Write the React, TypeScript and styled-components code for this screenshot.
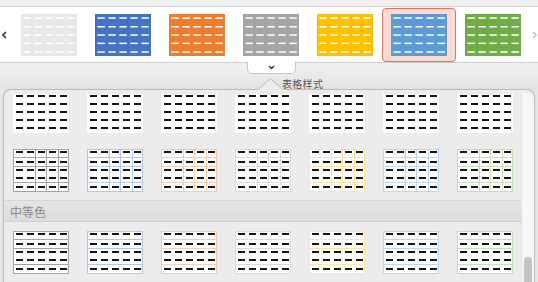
import { useLayoutEffect, useRef } from 'react';
import styled, { createGlobalStyle } from 'styled-components';

const GlobalStyle = createGlobalStyle`
  html, body {
    margin: 0;
    padding: 0;
  }
  body {
    background: #e7e7e7;
    font-family: 'Noto Sans CJK SC', 'Noto Sans', sans-serif;
  }
`;

const Page = styled.div`
  width: 538px;
  height: 282px;
  overflow: hidden;
  display: flex;
  flex-direction: column;
  background: #e7e7e7;
`;

const TopStrip = styled.div`
  flex-shrink: 0;
  height: 6px;
  background: #f1f1f1;
  border-bottom: 1px solid #d3d3d3;
`;

const Ribbon = styled.div`
  flex-shrink: 0;
  height: 55px;
  display: flex;
  align-items: flex-start;
  background: #fff;
  border-bottom: 1px solid #cdcdcd;
`;

const NavArrow = styled.div<{ $side: 'left' | 'right' }>`
  width: ${(p) => (p.$side === 'left' ? 12 : 8)}px;
  align-self: stretch;
  display: flex;
  align-items: center;
  justify-content: ${(p) => (p.$side === 'left' ? 'flex-start' : 'flex-end')};
  padding: ${(p) => (p.$side === 'left' ? '0 0 0 2px' : '0 1px 0 0')};
  box-sizing: border-box;
`;

const StyleCell = styled.div<{ $selected?: boolean }>`
  width: 74px;
  height: 54px;
  margin-top: 1px;
  box-sizing: border-box;
  padding: 5px 8px;
  border: 1px solid ${(p) => (p.$selected ? '#e2725b' : 'transparent')};
  border-radius: 4px;
  background: ${(p) => (p.$selected ? '#fadbd4' : 'transparent')};
  display: flex;
`;

const GalleryBar = styled.div`
  flex-shrink: 0;
  height: 26px;
  display: flex;
  flex-direction: column;
  align-items: flex-start;
  background: linear-gradient(#f0f0f0, #e4e4e4);
`;

const ExpandTab = styled.div`
  margin: -1px 0 0 247px;
  width: 49px;
  height: 12px;
  box-sizing: border-box;
  background: #fff;
  border: 1px solid #c6c6c6;
  border-top: none;
  border-radius: 0 0 5px 5px;
  display: flex;
  align-items: center;
  justify-content: center;
`;

const BarLabel = styled.div`
  margin: 4px 0 0 282px;
  font-size: 10px;
  line-height: 11px;
  color: #555;
  letter-spacing: 0.3px;
`;

const Panel = styled.div`
  position: relative;
  flex: none;
  height: 200px;
  margin-left: 3px;
  width: 532px;
  box-sizing: border-box;
  display: flex;
  background: #ececec;
  border: 1px solid #bdbdbd;
  border-bottom: none;
  border-radius: 8px 8px 0 0;
  box-shadow: 0 0 2px rgba(0, 0, 0, 0.08);
`;

const PanelPointer = styled.svg`
  position: absolute;
  left: 254px;
  top: -12px;
`;

const Viewport = styled.div`
  flex: 1;
  min-height: 0;
  margin-top: 4px;
  overflow: hidden;
`;

const ThumbRow = styled.div<{ $after: number }>`
  display: grid;
  grid-template-columns: repeat(7, 56px);
  column-gap: 18px;
  padding-left: 9px;
  margin-bottom: ${(p) => p.$after}px;
`;

const SectionHeader = styled.div`
  height: 22px;
  box-sizing: border-box;
  margin-bottom: 9px;
  padding-left: 6px;
  display: flex;
  align-items: center;
  font-size: 12px;
  color: #8a8a8a;
  background: linear-gradient(#e4e4e4, #dcdcdc);
  border-top: 1px solid #d6d6d6;
  border-bottom: 1px solid #d0d0d0;
`;

const ScrollTrack = styled.div`
  width: 12px;
  margin-top: 3px;
  display: flex;
  flex-direction: column;
  align-items: center;
  background: #f7f7f7;
  border-left: 1px solid #e4e4e4;
  border-radius: 0 6px 0 0;
`;

const ScrollThumb = styled.div`
  margin-top: 164px;
  width: 8px;
  height: 40px;
  border-radius: 4px;
  background: #c2c2c2;
`;

const SWATCHES = ['#e7e7e7', '#4472c4', '#ed7d31', '#a5a5a5', '#ffc000', '#5b9bd5', '#70ad47'];
const LINES = ['#a6a6a6', '#b4c7e7', '#f8cbad', '#dbdbdb', '#ffe699', '#bdd7ee', '#c5e0b4'];
const DASH_X = [3, 14, 25, 36, 47];

type Variant = 'plain' | 'grid' | 'band';

function Swatch({ color }: { color: string }) {
  const rows = [4, 12.7, 21, 29.3, 38];
  return (
    <svg width={56} height={42} viewBox='0 0 56 42'>
      <rect width={56} height={42} fill={color} />
      {rows.map((y) =>
        DASH_X.map((x) => (
          <rect key={`${x}-${y}`} x={x - 0.6} y={y - 0.7} width={7.4} height={1.5} fill='#fff' />
        ))
      )}
    </svg>
  );
}

function Thumb({ variant, line }: { variant: Variant; line: string }) {
  const rows = variant === 'plain' ? [6, 14, 22, 30, 38] : [3, 13, 21, 29, 38];
  const hLines = [8, 17, 33];
  const vLines = variant === 'grid' ? [22, 33, 45] : [];
  return (
    <svg width={56} height={43} viewBox='0 0 56 43' shapeRendering='crispEdges'>
      <rect width={56} height={43} fill='#fff' />
      {variant !== 'plain' && (
        <>
          {hLines.map((y) => (
            <rect key={`h${y}`} x={0} y={y} width={56} height={1} fill={line} />
          ))}
          {vLines.map((x) => (
            <rect key={`v${x}`} x={x} y={0} width={1} height={43} fill={line} />
          ))}
          <rect x={0.5} y={0.5} width={55} height={42} fill='none' stroke={line} strokeWidth={1} />
        </>
      )}
      {rows.map((y) =>
        DASH_X.map((x) => (
          <rect key={`${x}-${y}`} x={x} y={y - 1} width={7} height={2} fill='#151515' />
        ))
      )}
    </svg>
  );
}

function Chevron({ dir, color }: { dir: 'left' | 'right' | 'down'; color: string }) {
  if (dir === 'down') {
    return (
      <svg width={7} height={5} viewBox='0 0 7 5'>
        <polyline points='1,1 3.5,3.5 6,1' fill='none' stroke={color} strokeWidth={1.5} />
      </svg>
    );
  }
  const pts = dir === 'left' ? '4,1 1,4 4,7' : '1,1 4,4 1,7';
  return (
    <svg width={5} height={8} viewBox='0 0 5 8'>
      <polyline points={pts} fill='none' stroke={color} strokeWidth={1.6} />
    </svg>
  );
}

function ThumbGrid({ variant, after }: { variant: Variant; after: number }) {
  return (
    <ThumbRow $after={after}>
      {LINES.map((line) => (
        <Thumb key={line} variant={variant} line={line} />
      ))}
    </ThumbRow>
  );
}

export default function App() {
  const viewRef = useRef<HTMLDivElement>(null);

  useLayoutEffect(() => {
    if (viewRef.current) viewRef.current.scrollTop = 4;
  }, []);

  return (
    <Page>
      <GlobalStyle />
      <TopStrip />
      <Ribbon>
        <NavArrow $side='left'>
          <Chevron dir='left' color='#333' />
        </NavArrow>
        {SWATCHES.map((color, i) => (
          <StyleCell key={color} $selected={i === 5}>
            <Swatch color={color} />
          </StyleCell>
        ))}
        <NavArrow $side='right'>
          <Chevron dir='right' color='#c4c4c4' />
        </NavArrow>
      </Ribbon>
      <GalleryBar>
        <ExpandTab>
          <Chevron dir='down' color='#333' />
        </ExpandTab>
        <BarLabel>表格样式</BarLabel>
      </GalleryBar>
      <Panel>
        <PanelPointer width={26} height={13} viewBox='0 0 26 13'>
          <polygon points='0,13 0,11.5 12.5,0.5 25,11.5 25,13' fill='#ececec' />
          <polyline points='0,11.5 12.5,0.5 25,11.5' fill='none' stroke='#bdbdbd' strokeWidth={1} />
        </PanelPointer>
        <Viewport ref={viewRef}>
          <ThumbGrid variant='plain' after={16} />
          <ThumbGrid variant='grid' after={8} />
          <SectionHeader>中等色</SectionHeader>
          <ThumbGrid variant='band' after={16} />
          <ThumbGrid variant='band' after={16} />
        </Viewport>
        <ScrollTrack>
          <ScrollThumb />
        </ScrollTrack>
      </Panel>
    </Page>
  );
}
